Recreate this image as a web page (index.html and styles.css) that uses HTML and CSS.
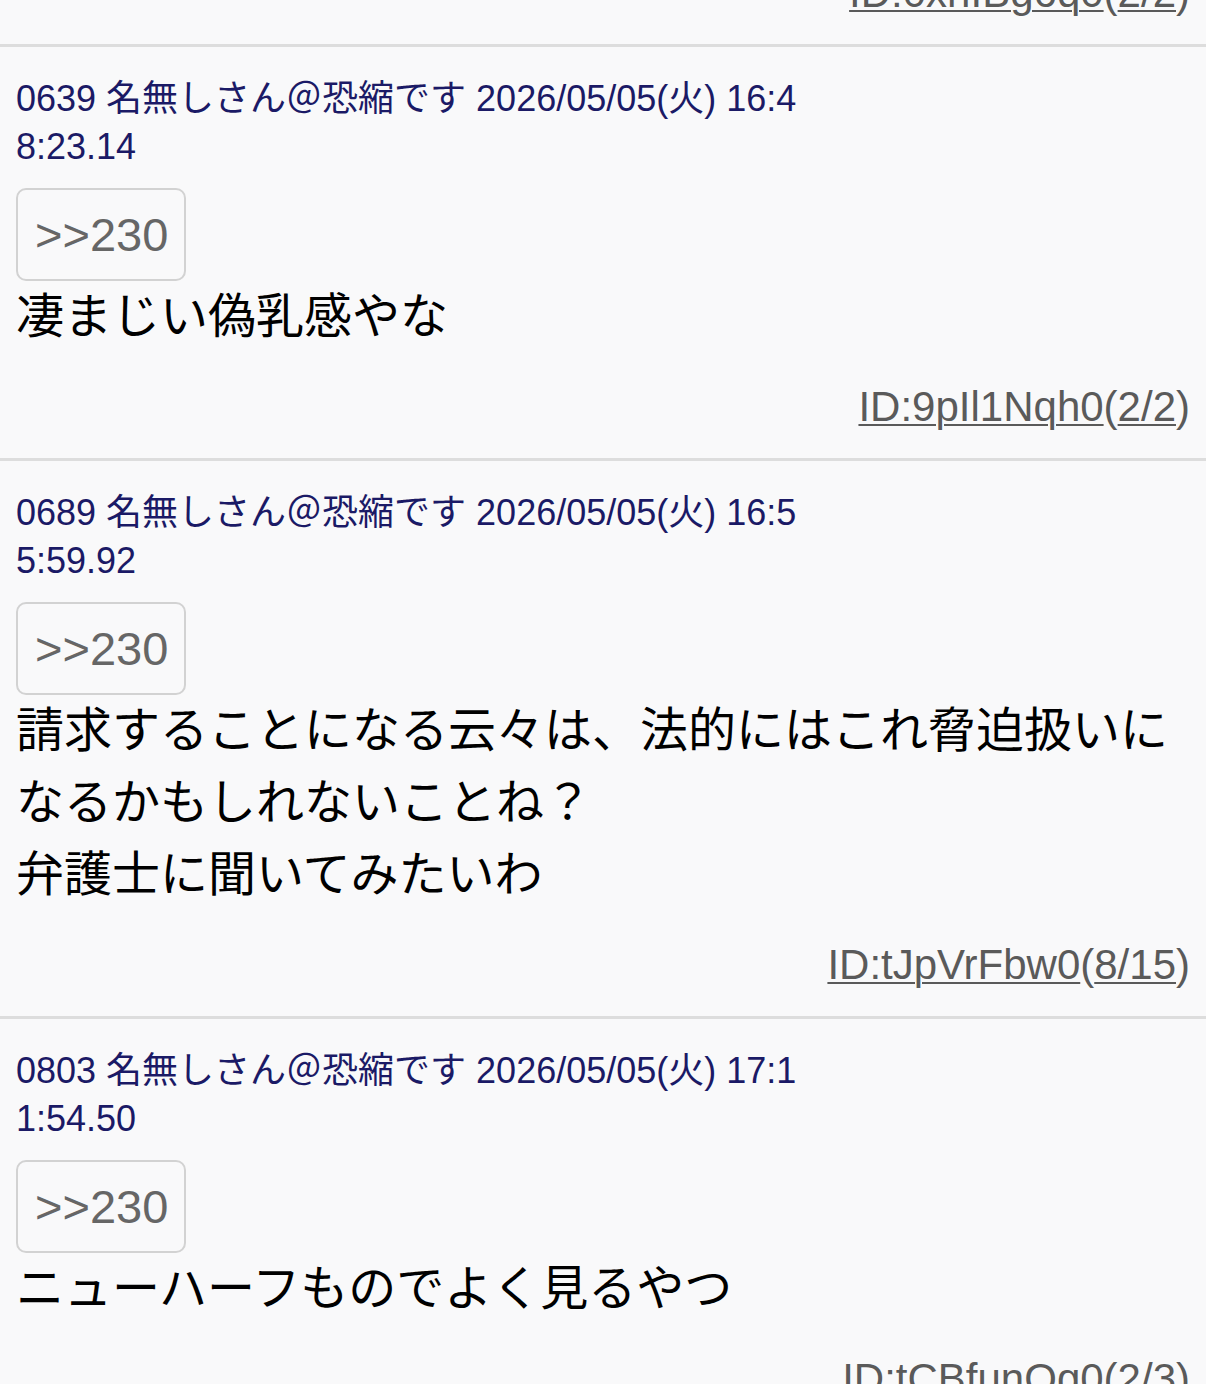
FILE: index.html
```html
<!DOCTYPE html>
<html lang="ja">
<head>
    <meta charset="UTF-8">
    <meta name="viewport" content="width=device-width, initial-scale=1.0">
    <title>スレッド</title>
    <link rel="stylesheet" href="styles.css">
</head>
<body>
    <div class="thread">
        <div class="post tail">
            <div class="uid"><a href="#">ID:0xhIBg6q0</a>(<a href="#">2/2</a>)</div>
        </div>

        <div class="post">
            <div class="meta">0639 名無しさん＠恐縮です 2026/05/05(火) 16:48:23.14</div>
            <a class="anchor" href="#">&gt;&gt;230</a>
            <div class="message">凄まじい偽乳感やな</div>
            <div class="uid"><a href="#">ID:9pIl1Nqh0</a>(<a href="#">2/2</a>)</div>
        </div>

        <div class="post">
            <div class="meta">0689 名無しさん＠恐縮です 2026/05/05(火) 16:55:59.92</div>
            <a class="anchor" href="#">&gt;&gt;230</a>
            <div class="message">請求することになる云々は、法的にはこれ脅迫扱いになるかもしれないことね？<br>弁護士に聞いてみたいわ</div>
            <div class="uid"><a href="#">ID:tJpVrFbw0</a>(<a href="#">8/15</a>)</div>
        </div>

        <div class="post">
            <div class="meta">0803 名無しさん＠恐縮です 2026/05/05(火) 17:11:54.50</div>
            <a class="anchor" href="#">&gt;&gt;230</a>
            <div class="message">ニューハーフものでよく見るやつ</div>
            <div class="uid"><a href="#">ID:tCBfunOg0</a>(<a href="#">2/3</a>)</div>
        </div>
    </div>
</body>
</html>
```

FILE: styles.css
```css
body {
    margin: 0;
    padding: 0;
    background-color: #f9f9fa;
    font-family: "Liberation Sans", "Noto Sans CJK JP", sans-serif;
    color: #000;
    overflow: hidden;
}
.thread {
    margin-top: -35px;
}
.post {
    border-top: 3px solid #dddddd;
    padding: 28px 16px 23px;
}
.post.tail {
    border-top: none;
    padding-top: 0;
}
.meta {
    max-width: 790px;
    font-size: 36px;
    line-height: 48px;
    color: #1b1a66;
    word-break: break-all;
}
.anchor {
    display: inline-block;
    margin-top: 17px;
    padding: 14px 16px 14px 17px;
    line-height: 61px;
    font-size: 47px;
    color: #666;
    text-decoration: none;
    border: 2px solid #d2d2d2;
    border-radius: 10px;
}
.message {
    font-size: 48px;
    line-height: 72px;
    color: #000;
}
.uid {
    margin-top: 26px;
    text-align: right;
    font-size: 42px;
    line-height: 56px;
    color: #5a5a5a;
}
.post.tail .uid {
    margin-top: 0;
}
.uid a {
    color: #5a5a5a;
    text-decoration: underline;
    text-decoration-thickness: 2px;
    text-underline-offset: 3px;
}
```
